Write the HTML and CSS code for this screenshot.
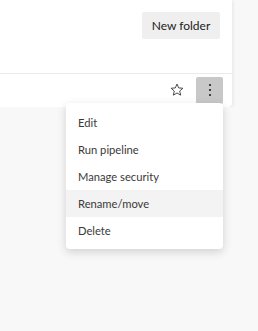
FILE: index.html
```html
<!DOCTYPE html>
<html lang="en">
<head>
    <meta charset="UTF-8">
    <meta name="viewport" content="width=device-width, initial-scale=1.0">
    <title>Pipelines</title>
    <link rel="stylesheet" href="styles.css">
</head>
<body>
    <div class="card">
        <div class="card-top">
            <button class="btn">New folder</button>
        </div>
        <div class="card-footer">
            <button class="icon-btn star-btn" title="Favorite">
                <svg width="14" height="14" viewBox="0 0 16 16">
                    <path d="M8 1.2l1.9 4.4 4.8.4-3.6 3.2 1.1 4.7L8 11.4l-4.2 2.5 1.1-4.7L1.3 6l4.8-.4z" fill="none" stroke="#333" stroke-width="1" stroke-linejoin="round"/>
                </svg>
            </button>
            <button class="icon-btn more-btn" title="More actions">
                <svg width="4" height="14" viewBox="0 0 4 14">
                    <circle cx="2" cy="2" r="1.1" fill="#222"/>
                    <circle cx="2" cy="7" r="1.1" fill="#222"/>
                    <circle cx="2" cy="12" r="1.1" fill="#222"/>
                </svg>
            </button>
        </div>
    </div>

    <!-- context menu opened from the more button -->
    <ul class="menu">
        <li>Edit</li>
        <li>Run pipeline</li>
        <li>Manage security</li>
        <li class="active">Rename/move</li>
        <li>Delete</li>
    </ul>
</body>
</html>
```

FILE: styles.css
```css
body {
    margin: 0;
    padding: 0;
    font-family: Lato, Arial, sans-serif;
    background-color: #f8f8f8;
    color: #333;
}

.card {
    width: 232px;
    background: #fff;
    border-radius: 0 0 4px 0;
    box-shadow: 0 1px 4px rgba(0, 0, 0, 0.12);
}

.card-top {
    display: flex;
    justify-content: flex-end;
    height: 74px;
    padding: 12px 12px 0 0;
    box-sizing: border-box;
    border-bottom: 1px solid #eaeaea;
}

.btn {
    height: 27px;
    width: 78px;
    padding: 0;
    font-family: inherit;
    font-size: 12px;
    color: #222;
    background-color: #efefef;
    border: none;
    border-radius: 2px;
    cursor: pointer;
}

.card-footer {
    display: flex;
    justify-content: flex-end;
    align-items: center;
    gap: 6px;
    height: 30px;
    padding: 1px 9px 2px 0;
}

.icon-btn {
    display: flex;
    align-items: center;
    justify-content: center;
    width: 27px;
    height: 27px;
    padding: 0;
    border: none;
    border-radius: 2px;
    background: transparent;
    cursor: pointer;
}

.more-btn {
    background-color: #c8c8c8;
}

.menu {
    position: absolute;
    left: 66px;
    top: 103px;
    width: 157px;
    margin: 0;
    padding: 6px 0 5px;
    list-style: none;
    background: #fff;
    border-radius: 4px;
    box-shadow: 0 3px 10px rgba(0, 0, 0, 0.16);
    font-size: 11.2px;
    color: #3a3a3a;
}

.menu li {
    height: 27px;
    line-height: 27px;
    padding-left: 12px;
    cursor: pointer;
}

.menu li.active {
    background-color: #f3f3f3;
}
```
